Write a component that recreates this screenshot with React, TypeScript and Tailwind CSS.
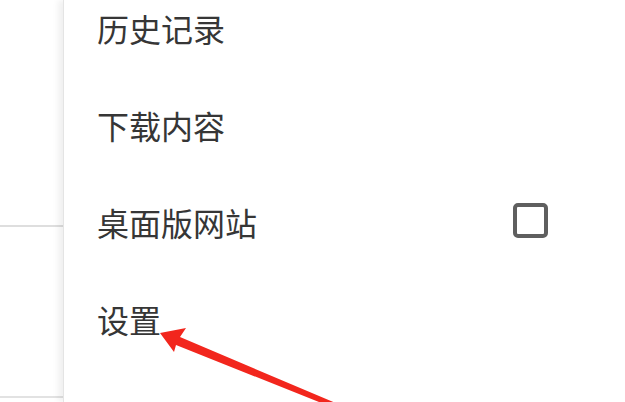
import React from "react"

const items = ["历史记录", "下载内容", "桌面版网站", "设置", "帮助和反馈"]

export default function App() {
  return (
    <div
      className="relative flex h-[402px] w-[625px] overflow-hidden bg-white"
      style={{ fontFamily: '"Noto Sans CJK SC", "Noto Sans", sans-serif' }}
    >
      {/* page behind the menu */}
      <div className="flex w-[63px] shrink-0 flex-col">
        <div className="h-[225px]" />
        <div className="h-[2px] bg-[#dedede]" />
        <div className="h-[169px]" />
        <div className="h-[2px] bg-[#e2e2e2]" />
      </div>

      {/* overflow menu */}
      <div className="flex-1 border-l border-[#e4e4e4] bg-white shadow-[-5px_0_6px_rgba(0,0,0,0.06)]">
        <div className="-mt-[21px] flex flex-col">
          {items.map((label) => (
            <div key={label} className="flex h-[97px] items-center justify-between pl-[33px] pr-[77px]">
              <span className="text-[32px] leading-none text-[#363636]">{label}</span>
              {label === "桌面版网站" && (
                <span className="mt-[-2px] h-[35px] w-[35px] rounded-[5px] border-[4px] border-[#5f5f5f]" />
              )}
            </div>
          ))}
        </div>
      </div>

      {/* annotation arrow */}
      <svg className="pointer-events-none absolute left-0 top-0" width="625" height="402" viewBox="0 0 625 402">
        <polygon
          points="160,333 186,328 180,337 338,404 324,404 176,345 174,352"
          fill="#f2261d"
        />
      </svg>
    </div>
  )
}
